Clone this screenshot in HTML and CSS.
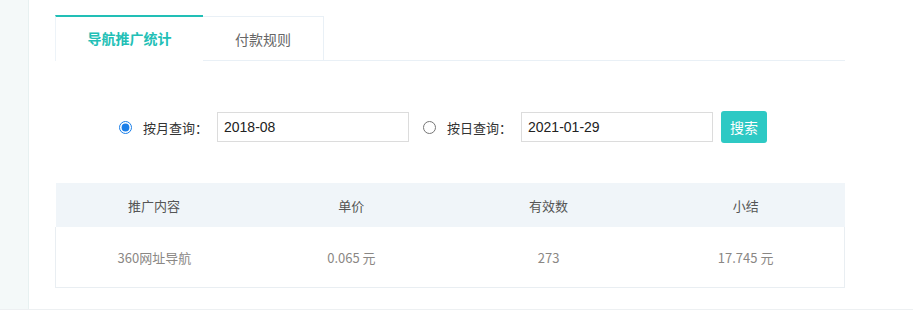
FILE: index.html
```html
<!DOCTYPE html>
<html lang="zh-CN">
<head>
  <meta charset="UTF-8">
  <title>导航推广统计</title>
  <link rel="stylesheet" href="styles.css">
</head>
<body>
  <div class="page">
    <div class="sidebar"></div>
    <div class="main">
      <div class="tabs">
        <div class="tab active">导航推广统计</div>
        <div class="tab">付款规则</div>
      </div>

      <form class="search">
        <label class="opt">
          <input type="radio" name="mode" value="month" checked>
          <span>按月查询：</span>
        </label>
        <input class="field" name="month" value="2018-08">
        <label class="opt opt2">
          <input type="radio" name="mode" value="day">
          <span>按日查询：</span>
        </label>
        <input class="field" name="day" value="2021-01-29">
        <button type="button">搜索</button>
      </form>

      <table class="stats">
        <thead>
          <tr>
            <th>推广内容</th>
            <th>单价</th>
            <th>有效数</th>
            <th>小结</th>
          </tr>
        </thead>
        <tbody>
          <tr>
            <td>360网址导航</td>
            <td>0.065 元</td>
            <td>273</td>
            <td>17.745 元</td>
          </tr>
        </tbody>
      </table>
    </div>
  </div>
</body>
</html>
```

FILE: styles.css
```css
body {
  margin: 0;
  font-family: "Liberation Sans", "Noto Sans CJK SC", sans-serif;
  background: #fff;
  color: #333;
}
.page {
  display: flex;
  height: 309px;
  border-bottom: 1px solid #edf0f2;
}
.sidebar {
  width: 28px;
  background: #f4f9f9;
  border-right: 1px solid #e7f1f1;
}
.main {
  width: 790px;
  padding: 15px 0 0 26px;
}
.tabs {
  display: flex;
  height: 45px;
  border-bottom: 1px solid #e9f0f6;
}
.tab {
  box-sizing: border-box;
  display: flex;
  align-items: center;
  justify-content: center;
  font-size: 14px;
  font-family: "Noto Sans CJK SC", sans-serif;
  color: #666;
  background: #fff;
  height: 45px;
}
.tab.active {
  width: 148px;
  height: 46px;
  padding-bottom: 2px;
  border-top: 2px solid #22bfb6;
  border-left: 1px solid #edf3f8;
  color: #22bfb6;
  font-weight: bold;
  margin-bottom: -1px;
}
.tab:not(.active) {
  width: 121px;
  margin-top: 1px;
  height: 44px;
  border-top: 1px solid #e9f0f6;
  border-right: 1px solid #e9f0f6;
}
.search {
  display: flex;
  align-items: center;
  margin: 50px 0 0;
  padding-left: 64px;
  height: 32px;
}
.opt {
  display: flex;
  align-items: center;
  font-size: 13px;
  color: #333;
  font-family: "Noto Sans CJK SC", sans-serif;
}
.opt input {
  width: 13px;
  height: 13px;
  margin: 0 11px 0 0;
  accent-color: #1a7ee8;
}
.opt span {
  width: 74px;
}
.opt2 {
  margin-left: 14px;
}
.field {
  box-sizing: border-box;
  width: 192px;
  height: 30px;
  padding: 0 6px;
  border: 1px solid #dcdcdc;
  font-family: "Liberation Sans", sans-serif;
  font-size: 14px;
  color: #222;
  outline: none;
}
button {
  margin-left: 8px;
  width: 46px;
  height: 32px;
  background: #2ec9c4;
  color: #fff;
  border: none;
  border-radius: 3px;
  font-size: 14px;
  font-family: "Noto Sans CJK SC", sans-serif;
  cursor: pointer;
}
.stats {
  margin-top: 40px;
  width: 790px;
  border-collapse: collapse;
  table-layout: fixed;
  font-size: 13px;
  font-family: "Noto Sans CJK SC", sans-serif;
}
.stats th {
  height: 44px;
  background: #f0f5f9;
  color: #555;
  font-weight: normal;
  padding: 0;
}
.stats td {
  height: 60px;
  text-align: center;
  color: #8a8784;
  border-bottom: 1px solid #e9eef2;
  padding: 0;
}
.stats td:first-child {
  border-left: 1px solid #e9eef2;
}
.stats td:last-child {
  border-right: 1px solid #e9eef2;
}
```
